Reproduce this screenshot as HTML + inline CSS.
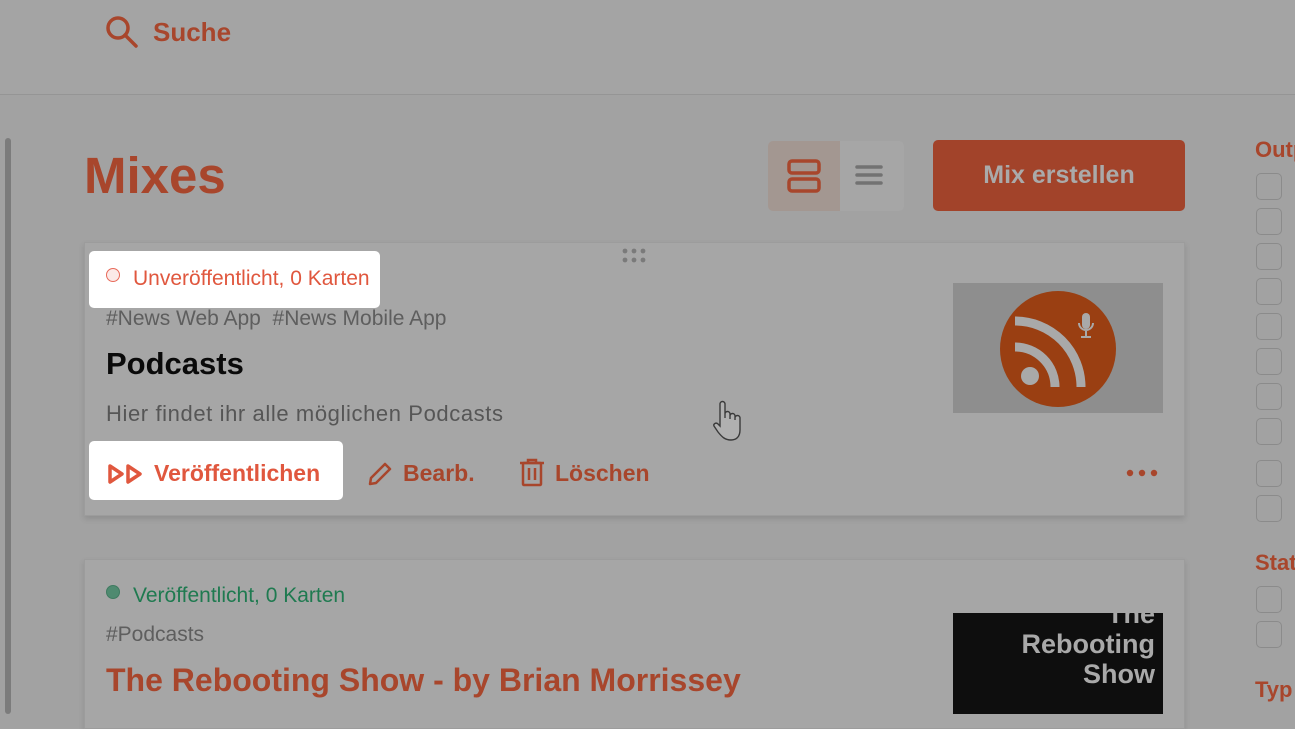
<!DOCTYPE html>
<html><head><meta charset="utf-8"><style>
*{box-sizing:border-box;margin:0;padding:0}
body{width:1295px;height:714px;overflow:hidden;background:#a2a2a2;font-family:"Liberation Sans",Arial,sans-serif;position:relative}
.hdr{position:absolute;left:0;top:0;width:1295px;height:95px;background:#a4a4a4;border-bottom:1px solid #959595}
.abs{position:absolute}
.card{position:absolute;left:84px;background:#a6a6a6;border:1px solid #9c9c9c;box-shadow:0 3px 6px rgba(0,0,0,.12)}
.o{color:#a8462c}
.cb{position:absolute;left:1256px;width:26px;height:27px;border:1.5px solid #8b8b8b;border-radius:5px}
</style></head><body>
<div class="hdr"></div>
<svg class="abs" style="left:104px;top:14px" width="36" height="36" viewBox="0 0 36 36"><circle cx="14" cy="14" r="10" fill="none" stroke="#a8462c" stroke-width="3.5"/><line x1="21" y1="21" x2="32" y2="32" stroke="#a8462c" stroke-width="3.5" stroke-linecap="round"/></svg>
<div class="abs o" style="left:153px;top:17px;font-size:26px;font-weight:bold">Suche</div>
<div class="abs" style="left:5px;top:138px;width:6px;height:576px;background:#7c7c7c;border-radius:3px"></div>
<div class="abs o" style="left:84px;top:146px;font-size:51px;font-weight:bold">Mixes</div>
<div class="abs" style="left:768px;top:141px;width:136px;height:70px;background:#a6a6a6;border-radius:5px"></div>
<div class="abs" style="left:768px;top:141px;width:72px;height:70px;background:#a39791;border-radius:5px 0 0 5px"></div>
<svg class="abs" style="left:786px;top:158px" width="36" height="36" viewBox="0 0 36 36"><rect x="3" y="3" width="30" height="12" rx="3" fill="none" stroke="#a8462c" stroke-width="3.5"/><rect x="3" y="21" width="30" height="12" rx="3" fill="none" stroke="#a8462c" stroke-width="3.5"/></svg>
<svg class="abs" style="left:854px;top:163px" width="30" height="24"><g stroke="#727272" stroke-width="3.5" stroke-linecap="round"><line x1="3" y1="4" x2="27" y2="4"/><line x1="3" y1="12" x2="27" y2="12"/><line x1="3" y1="20" x2="27" y2="20"/></g></svg>
<div class="abs" style="left:933px;top:140px;width:252px;height:71px;background:#a2432a;border-radius:5px;color:#aaaaaa;font-size:25px;font-weight:bold;line-height:71px;text-align:center">Mix erstellen</div>
<div class="abs o" style="left:1255px;top:137px;font-size:22px;font-weight:bold">Outp</div>
<div class="cb" style="top:173px"></div><div class="cb" style="top:208px"></div><div class="cb" style="top:243px"></div><div class="cb" style="top:278px"></div><div class="cb" style="top:313px"></div><div class="cb" style="top:348px"></div><div class="cb" style="top:383px"></div><div class="cb" style="top:418px"></div><div class="cb" style="top:460px"></div><div class="cb" style="top:495px"></div>
<div class="abs o" style="left:1255px;top:550px;font-size:22px;font-weight:bold">Stat</div>
<div class="cb" style="top:586px"></div><div class="cb" style="top:621px"></div>
<div class="abs o" style="left:1255px;top:677px;font-size:22px;font-weight:bold">Typ</div>
<div class="card" style="top:242px;width:1101px;height:274px"></div>
<svg class="abs" style="left:621px;top:247px" width="26" height="18"><g fill="#7a7a7a"><circle cx="4" cy="4" r="2.4"/><circle cx="13" cy="4" r="2.4"/><circle cx="22" cy="4" r="2.4"/><circle cx="4" cy="13" r="2.4"/><circle cx="13" cy="13" r="2.4"/><circle cx="22" cy="13" r="2.4"/></g></svg>
<div class="abs" style="left:89px;top:251px;width:291px;height:57px;background:#fff;border-radius:5px"></div>
<div class="abs" style="left:106px;top:268px;width:14px;height:14px;border-radius:50%;border:1.5px solid #e86a5a;background:#fbe9e7"></div>
<div class="abs" style="left:133px;top:267px;font-size:21px;color:#e0573e">Unveröffentlicht, 0 Karten</div>
<div class="abs" style="left:106px;top:307px;font-size:21px;color:#5e5e5e">#News Web App&nbsp;&nbsp;#News Mobile App</div>
<div class="abs" style="left:106px;top:346px;font-size:31px;font-weight:bold;color:#0a0a0a">Podcasts</div>
<div class="abs" style="left:106px;top:401px;font-size:22px;letter-spacing:0.6px;color:#565656">Hier findet ihr alle möglichen Podcasts</div>
<div class="abs" style="left:89px;top:441px;width:254px;height:59px;background:#fff;border-radius:5px"></div>
<svg class="abs" style="left:107px;top:463px" width="38" height="22"><g fill="none" stroke="#e0573e" stroke-width="3.5" stroke-linejoin="round"><path d="M3 3 L15 11 L3 19 Z"/><path d="M21 3 L33 11 L21 19 Z"/></g></svg>
<div class="abs" style="left:154px;top:460px;font-size:23px;font-weight:bold;color:#e0573e">Veröffentlichen</div>
<svg class="abs" style="left:366px;top:460px" width="28" height="28" viewBox="0 0 28 28"><path d="M4 24 L5 18 L19 4 L24 9 L10 23 Z" fill="none" stroke="#a8462c" stroke-width="2.5" stroke-linejoin="round"/></svg>
<div class="abs o" style="left:403px;top:460px;font-size:23px;font-weight:bold">Bearb.</div>
<svg class="abs" style="left:518px;top:458px" width="28" height="30" viewBox="0 0 28 30"><g fill="none" stroke="#a8462c" stroke-width="2.5"><path d="M2 5 H26"/><path d="M10 5 V2 H18 V5"/><rect x="5" y="5" width="18" height="22" rx="1"/><path d="M11 10 V22 M17 10 V22"/></g></svg>
<div class="abs o" style="left:555px;top:460px;font-size:23px;font-weight:bold">Löschen</div>
<svg class="abs" style="left:1125px;top:466px" width="34" height="14"><g fill="#a8462c"><circle cx="5" cy="7" r="3.2"/><circle cx="17" cy="7" r="3.2"/><circle cx="29" cy="7" r="3.2"/></g></svg>
<svg class="abs" style="left:953px;top:283px" width="210" height="130" viewBox="0 0 210 130"><rect width="210" height="130" fill="#8e8e8e"/><circle cx="105" cy="66" r="58" fill="#9a3f12"/><circle cx="77" cy="93" r="9" fill="#a9a9a9"/><path d="M62 64 A40 40 0 0 1 102 104" fill="none" stroke="#a9a9a9" stroke-width="9"/><path d="M62 38 A66 66 0 0 1 128 104" fill="none" stroke="#a9a9a9" stroke-width="9"/><rect x="129" y="30" width="8" height="16" rx="4" fill="#a9a9a9"/><path d="M126 40 A7 7 0 0 0 140 40 M133 47 V53 M128 54 H138" stroke="#a9a9a9" stroke-width="2" fill="none"/></svg>
<svg class="abs" style="left:712px;top:400px" width="32" height="42" viewBox="0 0 32 42"><path d="M8 26 V4 A2.5 2.5 0 0 1 13 4 V18 V14 A2.5 2.5 0 0 1 18 14 V19 V16 A2.5 2.5 0 0 1 23 16 V20 V18 A2.5 2.5 0 0 1 28 18 V30 C28 37 24 40 19 40 C13 40 10 37 6 32 L2 26 C1 24 4 22 6 24 Z" fill="#b0b0b0" stroke="#3a3a3a" stroke-width="1.4"/></svg>
<div class="card" style="top:559px;width:1101px;height:170px"></div>
<div class="abs" style="left:106px;top:585px;width:14px;height:14px;border-radius:50%;background:#4f8a70;border:1.5px solid #3f7a60"></div>
<div class="abs" style="left:133px;top:584px;font-size:21px;color:#1f7a50">Veröffentlicht, 0 Karten</div>
<div class="abs" style="left:106px;top:623px;font-size:21px;color:#5e5e5e">#Podcasts</div>
<div class="abs o" style="left:106px;top:662px;font-size:32px;font-weight:bold">The Rebooting Show - by Brian Morrissey</div>
<div class="abs" style="left:953px;top:613px;width:210px;height:101px;background:#0e0e0e;overflow:hidden">
<div style="position:absolute;right:8px;top:-14px;text-align:right;color:#a9a9a9;font-weight:bold;font-size:27px;line-height:30px">The<br>Rebooting<br>Show</div></div>
</body></html>
